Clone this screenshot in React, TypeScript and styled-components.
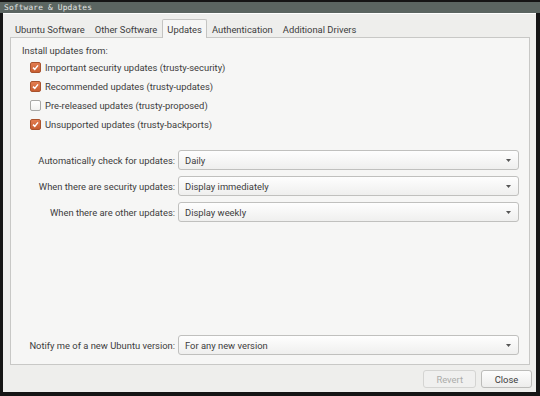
import styled, { createGlobalStyle } from 'styled-components';

const GlobalStyle = createGlobalStyle`
  html, body {
    margin: 0;
    padding: 0;
    background: #141414;
  }
  body {
    font-family: Roboto, "Liberation Sans", sans-serif;
    color: #3c3c3c;
  }
`;

const Frame = styled.div`
  width: 540px;
  height: 396px;
  display: flex;
  flex-direction: column;
  background: #151515;
  overflow: hidden;
`;

const TitleBar = styled.div`
  height: 11px;
  margin-top: 2px;
  padding-left: 4px;
  background: #5b6561;
  color: #e4e6e4;
  font-family: "DejaVu Sans Mono", monospace;
  font-size: 7.8px;
  line-height: 11px;
  letter-spacing: 0.2px;
`;

const Body = styled.div`
  flex: 1;
  margin: 0 4px 4px 3px;
  padding: 5px 6px 4px 7px;
  background: #eeeeec;
  border-top: 1px solid #ffffff;
  display: flex;
  flex-direction: column;
  font-size: 9.4px;
`;

const TabRow = styled.div`
  display: flex;
  height: 19px;
  margin-bottom: -1px;
  position: relative;
  z-index: 1;
`;

const Tab = styled.div<{ $active?: boolean }>`
  box-sizing: border-box;
  height: 19px;
  padding: 1px 4px 0;
  line-height: 18px;
  border: 1px solid ${(p) => (p.$active ? '#c4c4c2' : 'transparent')};
  border-bottom: none;
  border-radius: 2px 2px 0 0;
  background: ${(p) => (p.$active ? '#f6f6f5' : 'transparent')};
  color: #3c3c3c;
  white-space: nowrap;
`;

const Panel = styled.div`
  flex: 1;
  background: #f6f6f5;
  border: 1px solid #c8c8c6;
  padding: 7px 10px 9px 11px;
  display: flex;
  flex-direction: column;
`;

const Heading = styled.div`
  height: 12px;
  line-height: 12px;
`;

const CheckList = styled.div`
  margin-top: 1px;
  padding-left: 8px;
  display: flex;
  flex-direction: column;
`;

const CheckRow = styled.label`
  height: 19px;
  display: flex;
  align-items: center;
  gap: 4px;
`;

const Box = styled.span<{ $checked?: boolean }>`
  box-sizing: border-box;
  width: 11px;
  height: 11px;
  border-radius: 2px;
  border: 1px solid ${(p) => (p.$checked ? '#a9532d' : '#a8a8a6')};
  background: ${(p) =>
    p.$checked ? 'linear-gradient(#e27d50, #c85d31)' : 'linear-gradient(#ffffff, #f1f1f0)'};
  display: flex;
  align-items: center;
  justify-content: center;
`;

const OptionGrid = styled.div<{ $top?: string }>`
  margin-top: ${(p) => p.$top ?? '0'};
  display: grid;
  grid-template-columns: 153px 1fr;
  column-gap: 3px;
  row-gap: 6px;
`;

const Label = styled.div`
  align-self: center;
  text-align: right;
  white-space: nowrap;
`;

const Combo = styled.div`
  box-sizing: border-box;
  height: 20px;
  padding: 0 7px 0 6px;
  border: 1px solid #c0c0be;
  border-radius: 3px;
  background: linear-gradient(#fefefe, #efefee);
  display: flex;
  align-items: center;
  justify-content: space-between;
`;

const Spacer = styled.div`
  flex: 1;
`;

const ButtonRow = styled.div`
  margin: 5px -2px 0 0;
  display: flex;
  justify-content: flex-end;
  gap: 5px;
`;

const Button = styled.div<{ $disabled?: boolean }>`
  box-sizing: border-box;
  height: 18px;
  min-width: 51px;
  padding: 0 12px;
  border: 1px solid ${(p) => (p.$disabled ? '#d4d4d2' : '#bcbcba')};
  border-radius: 3px;
  background: ${(p) => (p.$disabled ? '#f0f0ef' : 'linear-gradient(#fdfdfd, #ededec)')};
  color: ${(p) => (p.$disabled ? '#acacaa' : '#3c3c3c')};
  display: flex;
  align-items: center;
  justify-content: center;
`;

const Check = () => (
  <svg width="7" height="7" viewBox="0 0 7 7">
    <path d="M1 3.6 L2.8 5.4 L6 1.4" fill="none" stroke="#fff" strokeWidth="1.5" />
  </svg>
);

const Arrow = () => (
  <svg width="5" height="3" viewBox="0 0 5 3">
    <path d="M0 0 H5 L2.5 3 Z" fill="#555" />
  </svg>
);

const sources = [
  { text: 'Important security updates (trusty-security)', on: true },
  { text: 'Recommended updates (trusty-updates)', on: true },
  { text: 'Pre-released updates (trusty-proposed)', on: false },
  { text: 'Unsupported updates (trusty-backports)', on: true },
];

const options = [
  { label: 'Automatically check for updates:', value: 'Daily' },
  { label: 'When there are security updates:', value: 'Display immediately' },
  { label: 'When there are other updates:', value: 'Display weekly' },
];

const tabs = ['Ubuntu Software', 'Other Software', 'Updates', 'Authentication', 'Additional Drivers'];

const App = () => {
  return (
    <Frame>
      <GlobalStyle />
      <TitleBar>Software &amp; Updates</TitleBar>
      <Body>
        <TabRow>
          {tabs.map((t) => (
            <Tab key={t} $active={t === 'Updates'}>
              {t}
            </Tab>
          ))}
        </TabRow>
        <Panel>
          <Heading>Install updates from:</Heading>
          <CheckList>
            {sources.map((s) => (
              <CheckRow key={s.text}>
                <Box $checked={s.on}>{s.on && <Check />}</Box>
                {s.text}
              </CheckRow>
            ))}
          </CheckList>
          <OptionGrid $top="16px">
            {options.map((o) => [
              <Label key={o.label}>{o.label}</Label>,
              <Combo key={o.value}>
                {o.value}
                <Arrow />
              </Combo>,
            ])}
          </OptionGrid>
          <Spacer />
          <OptionGrid>
            <Label>Notify me of a new Ubuntu version:</Label>
            <Combo>
              For any new version
              <Arrow />
            </Combo>
          </OptionGrid>
        </Panel>
        <ButtonRow>
          <Button $disabled>Revert</Button>
          <Button>Close</Button>
        </ButtonRow>
      </Body>
    </Frame>
  );
};

export default App;
